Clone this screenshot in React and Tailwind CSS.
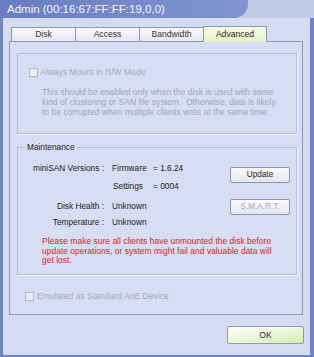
import React from 'react';

const font = "font-['Liberation_Sans',Arial,sans-serif]";

function Check({ className = '' }) {
  return (
    <span className={`inline-block w-[9px] h-[9px] border border-[#b3b9cb] bg-[#eceef5] ${className}`} />
  );
}

function Tab({ label, active }) {
  if (active) {
    return (
      <div className="w-[64px] h-[16px] -mb-px relative z-10 border border-b-0 border-[#8e97b3] bg-linear-to-b from-[#f6fae4] to-[#e9f3c8] flex items-center justify-center text-[8.6px] text-[#222]">
        {label}
      </div>
    );
  }
  return (
    <div className="w-[64px] h-[14px] border border-b-0 border-r-0 border-[#8e97b3] bg-linear-to-b from-[#fbfbfd] to-[#e6e8f0] flex items-center justify-center text-[8.6px] text-[#333]">
      {label}
    </div>
  );
}

function Button({ children, disabled, className = '' }) {
  return (
    <div
      className={`w-[60px] h-[16px] rounded-[2px] border border-[#8d97b1] bg-linear-to-b from-[#fdfdfe] to-[#e2e5ee] flex items-center justify-center text-[8.2px] ${
        disabled ? 'text-[#a2a8ba]' : 'text-[#222]'
      } ${className}`}
    >
      {children}
    </div>
  );
}

export default function App() {
  return (
    <div className={`w-[314px] h-[357px] bg-[#6e86c7] flex flex-col overflow-hidden ${font}`}>
      {/* title bar */}
      <div className="h-[18px] flex bg-[#c3cbeb]">
        <div className="flex-1 bg-linear-to-r from-[#687dc2] to-[#8193d1] rounded-br-[14px] flex items-center pl-[7px] pt-[2px] text-[11.5px] text-[#f4f6fc]">
          Admin (00:16:67:FF:FF:19,0,0)
        </div>
        <div className="w-[66px]" />
      </div>

      {/* body */}
      <div className="flex-1 ml-[3px] mr-[4px] mb-[2px] bg-[#d5dbf2] flex flex-col pl-[6px] pr-[7px] pt-[8px]">
        {/* tabs */}
        <div className="flex items-end ml-[2px]">
          <Tab label="Disk" />
          <Tab label="Access" />
          <Tab label="Bandwidth" />
          <Tab label="Advanced" active />
        </div>

        {/* tab panel */}
        <div className="h-[274px] border border-[#8e97b3] bg-[#d7ddf3] flex flex-col pt-[11px] pl-[7px] pr-[5px]">
          {/* group 1 */}
          <div className="h-[81px] border border-[#b6bdd6] shadow-[1px_1px_0_#f3f5fc] flex flex-col">
            <div className="flex items-center mt-[14px] ml-[11px] h-[9px]">
              <Check />
              <span className="ml-[2px] text-[8.6px] text-[#a3a9bc] leading-none">Always Mount in R/W Mode</span>
            </div>
            <div className="mt-[10px] ml-[24px] text-[8.55px] leading-[10px] text-[#a0a6b9] whitespace-nowrap">
              This should be enabled only when the disk is used with some
              <br />
              kind of clustering or SAN file system.&nbsp; Otherwise, data is likely
              <br />
              to be corrupted when multiple clients write at the same time.
            </div>
          </div>

          {/* maintenance */}
          <div className="mt-[13px] h-[128px] border border-[#b6bdd6] shadow-[1px_1px_0_#f3f5fc] relative flex flex-col text-[8.3px] text-[#1c1c1c]">
            <span className="absolute -top-[6px] left-[7px] px-[2px] bg-[#d7ddf3] leading-[10px]">Maintenance</span>
            <div className="flex mt-[15px]">
              <div className="flex-1 flex flex-col leading-[10px]">
                <div className="flex h-[10px]">
                  <span className="w-[86px] text-right whitespace-nowrap">miniSAN Versions :</span>
                  <span className="ml-[8px] w-[41px]">Firmware</span>
                  <span>= 1.6.24</span>
                </div>
                <div className="flex h-[10px] mt-[8px]">
                  <span className="w-[86px]" />
                  <span className="ml-[9px] w-[40px]">Settings</span>
                  <span>= 0004</span>
                </div>
                <div className="flex h-[10px] mt-[10px]">
                  <span className="w-[86px] text-right">Disk Health :</span>
                  <span className="ml-[8px]">Unknown</span>
                </div>
                <div className="flex h-[10px] mt-[6px]">
                  <span className="w-[86px] text-right">Temperature :</span>
                  <span className="ml-[8px]">Unknown</span>
                </div>
              </div>
              <div className="flex flex-col mr-[6px] mt-[4px]">
                <Button>Update</Button>
                <Button disabled className="mt-[16px]">S.M.A.R.T.</Button>
              </div>
            </div>
            <div className="mt-[10px] ml-[24px] text-[8.5px] leading-[9.6px] text-[#dd1f2a] whitespace-nowrap">
              Please make sure all clients have unmounted the disk before
              <br />
              update operations, or system might fail and valuable data will
              <br />
              get lost.
            </div>
          </div>

          {/* emulated */}
          <div className="flex items-center mt-[17px] ml-[8px] h-[9px]">
            <Check />
            <span className="ml-[3px] text-[8.6px] text-[#a3a9bc] leading-none">Emulated as Standard AoE Device</span>
          </div>
        </div>

        {/* ok */}
        <div className="flex justify-end mt-[11px] -mr-[1px]">
          <div className="w-[77px] h-[18px] rounded-[2px] border border-[#8e9ab4] bg-linear-to-br from-[#fbfdf6] via-[#eef6dc] to-[#d6ebab] flex items-center justify-center text-[8.6px] text-[#1c1c1c]">
            OK
          </div>
        </div>
      </div>
    </div>
  );
}
